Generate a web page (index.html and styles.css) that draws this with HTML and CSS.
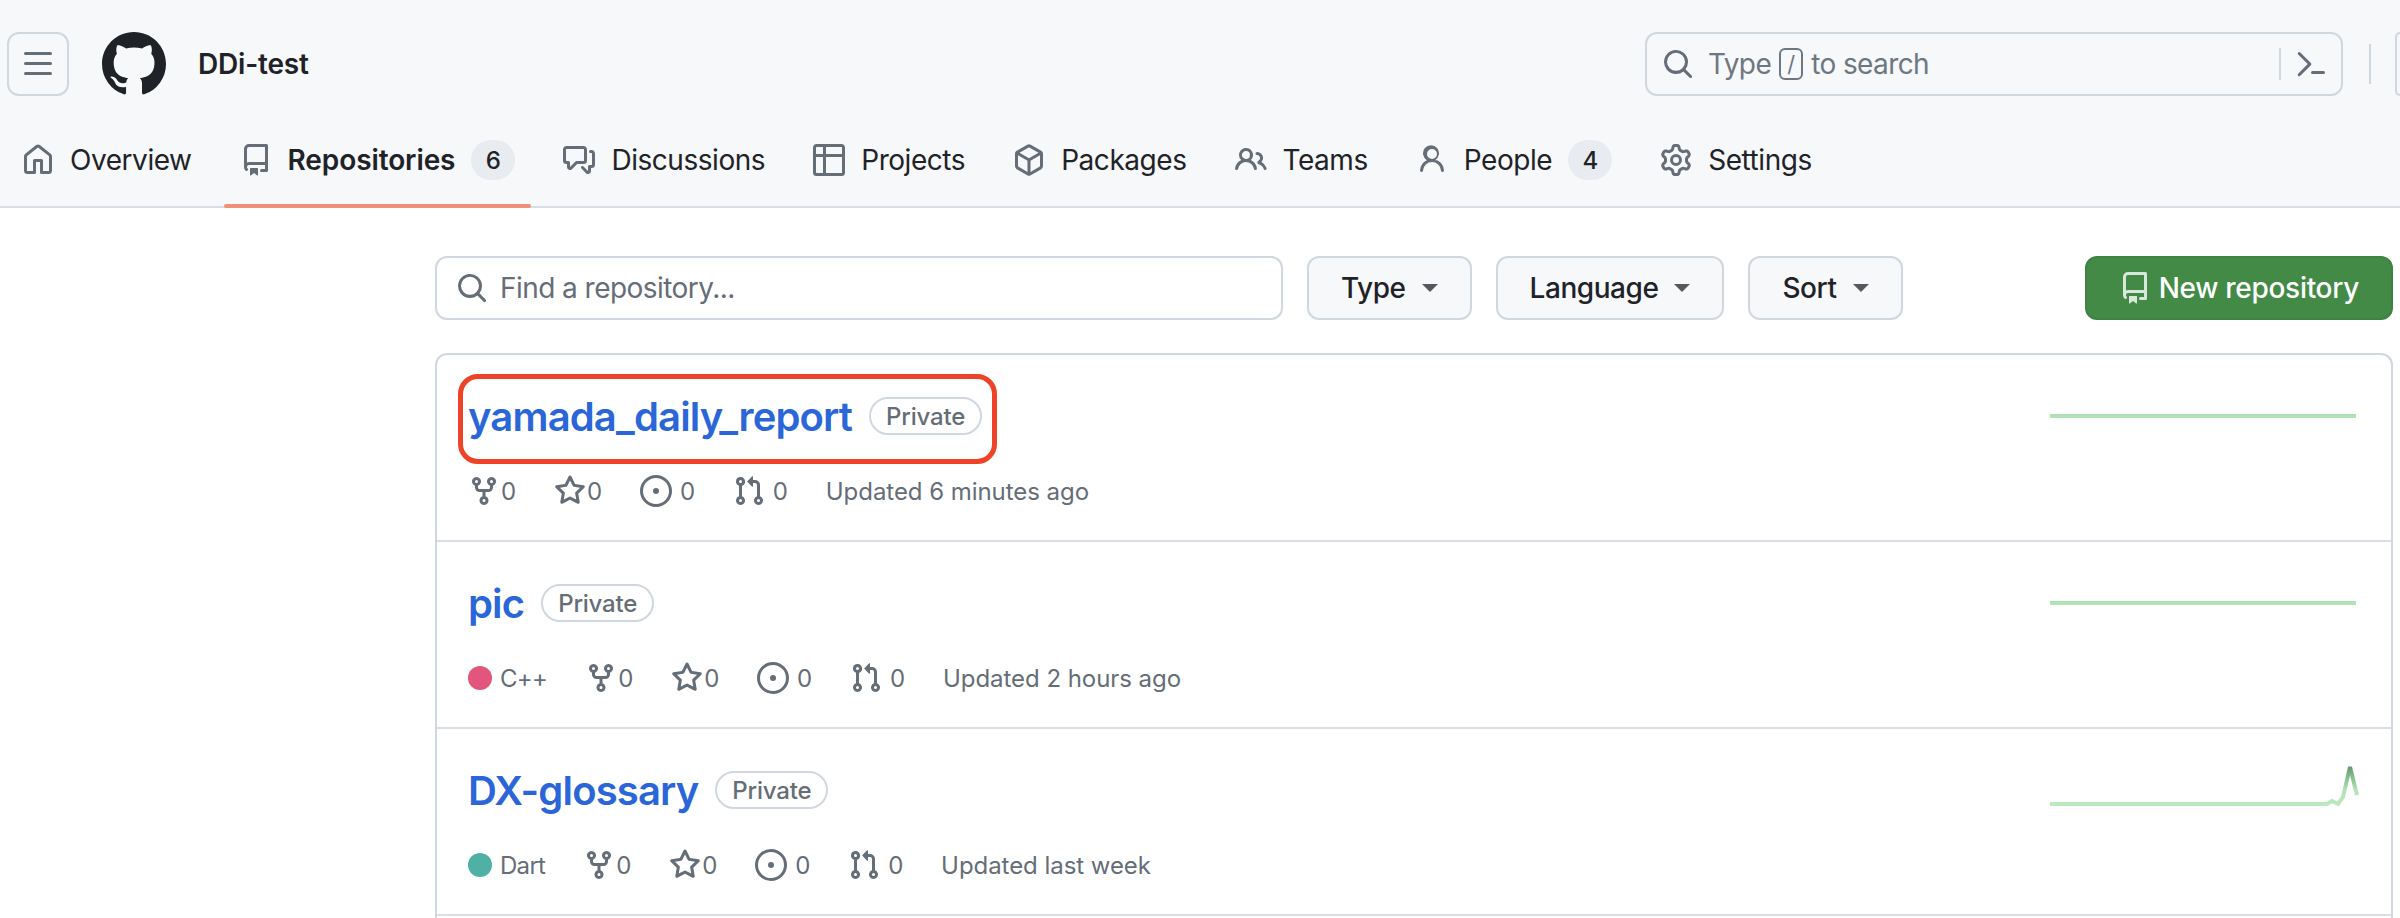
FILE: index.html
```html
<!DOCTYPE html>
<html lang="en">
<head>
<meta charset="utf-8">
<title>DDi-test repositories</title>
<link rel="stylesheet" href="styles.css">
</head>
<body>
<svg class="sprite" aria-hidden="true">
  <symbol id="i-bars" viewBox="0 0 16 16"><path d="M1 2.75A.75.75 0 0 1 1.75 2h12.5a.75.75 0 0 1 0 1.5H1.75A.75.75 0 0 1 1 2.75Zm0 5A.75.75 0 0 1 1.75 7h12.5a.75.75 0 0 1 0 1.5H1.75A.75.75 0 0 1 1 7.75ZM1.75 12h12.5a.75.75 0 0 1 0 1.5H1.75a.75.75 0 0 1 0-1.5Z"/></symbol>
  <symbol id="i-github" viewBox="0 0 16 16"><path d="M8 0c4.42 0 8 3.58 8 8a8.013 8.013 0 0 1-5.45 7.59c-.4.08-.55-.17-.55-.38 0-.27.01-1.13.01-2.2 0-.75-.25-1.23-.54-1.48 1.78-.2 3.65-.88 3.65-3.95 0-.88-.31-1.59-.82-2.15.08-.2.36-1.02-.08-2.12 0 0-.67-.22-2.2.82-.64-.18-1.32-.27-2-.27-.68 0-1.36.09-2 .27-1.53-1.03-2.2-.82-2.2-.82-.44 1.1-.16 1.92-.08 2.12-.51.56-.82 1.28-.82 2.15 0 3.06 1.86 3.75 3.64 3.95-.23.2-.44.55-.51 1.07-.46.21-1.61.55-2.33-.66-.15-.24-.6-.83-1.23-.82-.67.01-.27.38.01.53.34.19.73.9.82 1.13.16.45.68 1.31 2.69.94 0 .67.01 1.3.01 1.49 0 .21-.15.45-.55.38A7.995 7.995 0 0 1 0 8c0-4.42 3.58-8 8-8Z"/></symbol>
  <symbol id="i-home" viewBox="0 0 16 16"><path d="M6.906.664a1.749 1.749 0 0 1 2.187 0l5.25 4.2c.415.332.657.835.657 1.367v7.019A1.75 1.75 0 0 1 13.25 15h-3.5a.75.75 0 0 1-.75-.75V9H7v5.25a.75.75 0 0 1-.75.75h-3.5A1.75 1.75 0 0 1 1 13.25V6.23c0-.531.242-1.034.657-1.366l5.25-4.2Zm1.25 1.171a.25.25 0 0 0-.312 0l-5.25 4.2a.25.25 0 0 0-.094.196v7.019c0 .138.112.25.25.25H5.5V8.25a.75.75 0 0 1 .75-.75h3.5a.75.75 0 0 1 .75.75v5.25h2.75a.25.25 0 0 0 .25-.25V6.23a.25.25 0 0 0-.094-.195Z"/></symbol>
  <symbol id="i-repo" viewBox="0 0 16 16"><path d="M2 2.5A2.5 2.5 0 0 1 4.5 0h8.75a.75.75 0 0 1 .75.75v12.5a.75.75 0 0 1-.75.75h-2.5a.75.75 0 0 1 0-1.5h1.75v-2h-8a1 1 0 0 0-.714 1.7.75.75 0 1 1-1.072 1.05A2.495 2.495 0 0 1 2 11.5Zm10.5-1h-8a1 1 0 0 0-1 1v6.708A2.486 2.486 0 0 1 4.5 9h8ZM5 12.25a.25.25 0 0 1 .25-.25h3.5a.25.25 0 0 1 .25.25v3.25a.25.25 0 0 1-.4.2l-1.45-1.087a.249.249 0 0 0-.3 0L5.4 15.7a.25.25 0 0 1-.4-.2Z"/></symbol>
  <symbol id="i-discussion" viewBox="0 0 16 16"><path d="M1.75 1h8.5c.966 0 1.75.784 1.75 1.75v5.5A1.75 1.75 0 0 1 10.25 10H7.061l-2.574 2.573A1.458 1.458 0 0 1 2 11.543V10h-.25A1.75 1.75 0 0 1 0 8.25v-5.5C0 1.784.784 1 1.75 1ZM1.5 2.75v5.5c0 .138.112.25.25.25h1a.75.75 0 0 1 .75.75v2.19l2.72-2.72a.749.749 0 0 1 .53-.22h3.5a.25.25 0 0 0 .25-.25v-5.5a.25.25 0 0 0-.25-.25h-8.5a.25.25 0 0 0-.25.25Zm13 2a.25.25 0 0 0-.25-.25h-.5a.75.75 0 0 1 0-1.5h.5c.966 0 1.75.784 1.75 1.75v5.5A1.75 1.75 0 0 1 14.25 12H14v1.543a1.458 1.458 0 0 1-2.487 1.03L9.22 12.28a.749.749 0 0 1 .326-1.275.749.749 0 0 1 .734.215l2.22 2.22v-2.19a.75.75 0 0 1 .75-.75h1a.25.25 0 0 0 .25-.25Z"/></symbol>
  <symbol id="i-table" viewBox="0 0 16 16"><path d="M0 1.75C0 .784.784 0 1.75 0h12.5C15.216 0 16 .784 16 1.75v12.5A1.75 1.75 0 0 1 14.25 16H1.75A1.75 1.75 0 0 1 0 14.25ZM6.5 6.5v8h7.75a.25.25 0 0 0 .25-.25V6.5Zm8-1.5V1.75a.25.25 0 0 0-.25-.25H6.5V5Zm-13 1.5v7.75c0 .138.112.25.25.25H5v-8ZM5 5V1.5H1.75a.25.25 0 0 0-.25.25V5Z"/></symbol>
  <symbol id="i-package" viewBox="0 0 16 16"><path d="m8.878.392 5.25 3.045c.54.314.872.89.872 1.514v6.098a1.75 1.75 0 0 1-.872 1.514l-5.25 3.045a1.75 1.75 0 0 1-1.756 0l-5.25-3.045A1.75 1.75 0 0 1 1 11.049V4.951c0-.624.332-1.201.872-1.514L7.122.392a1.75 1.75 0 0 1 1.756 0ZM7.875 1.69l-4.63 2.685L8 7.133l4.755-2.758-4.63-2.685a.248.248 0 0 0-.25 0ZM2.5 5.677v5.372c0 .09.047.171.125.216l4.625 2.683V8.432Zm6.25 8.271 4.625-2.683a.25.25 0 0 0 .125-.216V5.677L8.75 8.432Z"/></symbol>
  <symbol id="i-people" viewBox="0 0 16 16"><path d="M2 5.5a3.5 3.5 0 1 1 5.898 2.549 5.508 5.508 0 0 1 3.034 4.084.75.75 0 1 1-1.482.235 4 4 0 0 0-7.9 0 .75.75 0 0 1-1.482-.236A5.507 5.507 0 0 1 3.102 8.05 3.493 3.493 0 0 1 2 5.5ZM11 4a3.001 3.001 0 0 1 2.22 5.018 5.01 5.01 0 0 1 2.56 3.012.749.749 0 0 1-.885.954.752.752 0 0 1-.549-.514 3.507 3.507 0 0 0-2.522-2.372.75.75 0 0 1-.574-.73v-.352a.75.75 0 0 1 .416-.672A1.5 1.5 0 0 0 11 5.5.75.75 0 0 1 11 4Zm-5.5-.5a2 2 0 1 0-.001 3.999A2 2 0 0 0 5.5 3.5Z"/></symbol>
  <symbol id="i-person" viewBox="0 0 16 16"><path d="M10.561 8.073a6.005 6.005 0 0 1 3.432 5.142.75.75 0 1 1-1.498.07 4.5 4.5 0 0 0-8.99 0 .75.75 0 0 1-1.498-.07 6.004 6.004 0 0 1 3.431-5.142 3.999 3.999 0 1 1 4.123 0ZM10.5 5a2.5 2.5 0 1 0-5 0 2.5 2.5 0 0 0 5 0Z"/></symbol>
  <symbol id="i-gear" viewBox="0 0 16 16"><path d="M8 0a8.2 8.2 0 0 1 .701.031C9.444.095 9.99.645 10.16 1.29l.288 1.107c.018.066.079.158.212.224.231.114.454.243.668.386.123.082.233.09.299.071l1.103-.303c.644-.176 1.392.021 1.82.63.27.385.506.792.704 1.218.315.675.111 1.422-.364 1.891l-.814.806c-.049.048-.098.147-.088.294.016.257.016.515 0 .772-.01.147.038.246.088.294l.814.806c.475.469.679 1.216.364 1.891a7.977 7.977 0 0 1-.704 1.217c-.428.61-1.176.807-1.82.63l-1.102-.302c-.067-.019-.177-.011-.3.071a5.909 5.909 0 0 1-.668.386c-.133.066-.194.158-.211.224l-.29 1.106c-.168.646-.715 1.196-1.458 1.26a8.006 8.006 0 0 1-1.402 0c-.743-.064-1.289-.614-1.458-1.26l-.289-1.106c-.018-.066-.079-.158-.212-.224a5.738 5.738 0 0 1-.668-.386c-.123-.082-.233-.09-.299-.071l-1.103.303c-.644.176-1.392-.021-1.82-.63a8.12 8.12 0 0 1-.704-1.218c-.315-.675-.111-1.422.363-1.891l.815-.806c.05-.048.098-.147.088-.294a6.214 6.214 0 0 1 0-.772c.01-.147-.038-.246-.088-.294l-.815-.806C.635 6.045.431 5.298.746 4.623a7.92 7.92 0 0 1 .704-1.217c.428-.61 1.176-.807 1.82-.63l1.102.302c.067.019.177.011.3-.071.214-.143.437-.272.668-.386.133-.066.194-.158.211-.224l.29-1.106C6.009.645 6.556.095 7.299.03 7.53.01 7.764 0 8 0Zm-.571 1.525c-.036.003-.108.036-.137.146l-.289 1.105c-.147.561-.549.967-.998 1.189-.173.086-.34.183-.5.29-.417.278-.97.423-1.529.27l-1.103-.303c-.109-.03-.175.016-.195.045-.22.312-.412.644-.573.99-.014.031-.021.11.059.19l.815.806c.411.406.562.957.53 1.456a4.709 4.709 0 0 0 0 .582c.032.499-.119 1.05-.53 1.456l-.815.806c-.081.08-.073.159-.059.19.162.346.353.677.573.989.02.03.085.076.195.046l1.102-.303c.56-.153 1.113-.008 1.53.27.161.107.328.204.501.29.447.222.85.629.997 1.189l.289 1.105c.029.109.101.143.137.146a6.6 6.6 0 0 0 1.142 0c.036-.003.108-.036.137-.146l.289-1.105c.147-.561.549-.967.998-1.189.173-.086.34-.183.5-.29.417-.278.97-.423 1.529-.27l1.103.303c.109.029.175-.016.195-.045.22-.313.411-.644.573-.99.014-.031.021-.11-.059-.19l-.815-.806c-.411-.406-.562-.957-.53-1.456a4.709 4.709 0 0 0 0-.582c-.032-.499.119-1.05.53-1.456l.815-.806c.081-.08.073-.159.059-.19a6.464 6.464 0 0 0-.573-.989c-.02-.03-.085-.076-.195-.046l-1.102.303c-.56.153-1.113.008-1.53-.27a4.44 4.44 0 0 0-.501-.29c-.447-.222-.85-.629-.997-1.189l-.289-1.105c-.029-.11-.101-.143-.137-.146a6.6 6.6 0 0 0-1.142 0ZM11 8a3 3 0 1 1-6 0 3 3 0 0 1 6 0ZM9.5 8a1.5 1.5 0 1 0-3.001.001A1.5 1.5 0 0 0 9.5 8Z"/></symbol>
  <symbol id="i-search" viewBox="0 0 16 16"><path d="M10.68 11.74a6 6 0 0 1-7.922-8.982 6 6 0 0 1 8.982 7.922l3.04 3.04a.749.749 0 0 1-.326 1.275.749.749 0 0 1-.734-.215ZM11.5 7a4.499 4.499 0 1 0-8.997 0A4.499 4.499 0 0 0 11.5 7Z"/></symbol>
  <symbol id="i-terminal" viewBox="0 0 16 16"><path d="m6.354 8.04-4.773 4.773a.75.75 0 1 0 1.061 1.06L7.945 8.57a.75.75 0 0 0 0-1.06L2.642 2.206a.75.75 0 0 0-1.06 1.061L6.353 8.04ZM8.75 11.5a.75.75 0 0 0 0 1.5h5.5a.75.75 0 0 0 0-1.5h-5.5Z"/></symbol>
  <symbol id="i-fork" viewBox="0 0 16 16"><path d="M5 5.372v.878c0 .414.336.75.75.75h4.5a.75.75 0 0 0 .75-.75v-.878a2.25 2.25 0 1 1 1.5 0v.878a2.25 2.25 0 0 1-2.25 2.25h-1.5v2.128a2.251 2.251 0 1 1-1.5 0V8.5h-1.5A2.25 2.25 0 0 1 3.5 6.25v-.878a2.25 2.25 0 1 1 1.5 0ZM5 3.25a.75.75 0 1 0-1.5 0 .75.75 0 0 0 1.5 0Zm6.75.75a.75.75 0 1 0 0-1.5.75.75 0 0 0 0 1.5Zm-3 8.75a.75.75 0 1 0-1.5 0 .75.75 0 0 0 1.5 0Z"/></symbol>
  <symbol id="i-star" viewBox="0 0 16 16"><path d="M8 .25a.75.75 0 0 1 .673.418l1.882 3.815 4.21.612a.75.75 0 0 1 .416 1.279l-3.046 2.97.719 4.192a.751.751 0 0 1-1.088.791L8 12.347l-3.766 1.98a.75.75 0 0 1-1.088-.79l.72-4.194L.818 6.374a.75.75 0 0 1 .416-1.28l4.21-.611L7.327.668A.75.75 0 0 1 8 .25Zm0 2.445L6.615 5.5a.75.75 0 0 1-.564.41l-3.097.45 2.24 2.184a.75.75 0 0 1 .216.664l-.528 3.084 2.769-1.456a.75.75 0 0 1 .698 0l2.77 1.456-.53-3.084a.75.75 0 0 1 .216-.664l2.24-2.183-3.096-.45a.75.75 0 0 1-.564-.41L8 2.694Z"/></symbol>
  <symbol id="i-issue" viewBox="0 0 16 16"><path d="M8 9.5a1.5 1.5 0 1 0 0-3 1.5 1.5 0 0 0 0 3Z"/><path d="M8 0a8 8 0 1 1 0 16A8 8 0 0 1 8 0ZM1.5 8a6.5 6.5 0 1 0 13 0 6.5 6.5 0 0 0-13 0Z"/></symbol>
  <symbol id="i-pr" viewBox="0 0 16 16"><path d="M1.5 3.25a2.25 2.25 0 1 1 3 2.122v5.256a2.251 2.251 0 1 1-1.5 0V5.372A2.25 2.25 0 0 1 1.5 3.25Zm5.677-.177L9.573.677A.25.25 0 0 1 10 .854V2.5h1A2.5 2.5 0 0 1 13.5 5v5.628a2.251 2.251 0 1 1-1.5 0V5a1 1 0 0 0-1-1h-1v1.646a.25.25 0 0 1-.427.177L7.177 3.427a.25.25 0 0 1 0-.354ZM3.75 2.5a.75.75 0 1 0 0 1.5.75.75 0 0 0 0-1.5Zm0 9.5a.75.75 0 1 0 0 1.5.75.75 0 0 0 0-1.5Zm8.25.75a.75.75 0 1 0 1.5 0 .75.75 0 0 0-1.5 0Z"/></symbol>
  <linearGradient id="spark" gradientUnits="userSpaceOnUse" x1="0" y1="80" x2="0" y2="30">
    <stop offset="0" stop-color="#c4ecc8"/><stop offset="0.5" stop-color="#b0e3b5"/><stop offset="0.72" stop-color="#8cc393"/><stop offset="1" stop-color="#66916d"/>
  </linearGradient>
</svg>

<header class="header">
  <div class="topbar">
    <button class="menu-btn"><svg class="icon"><use href="#i-bars"/></svg></button>
    <svg class="logo"><use href="#i-github"/></svg>
    <span class="org">DDi-test</span>
    <div class="search">
      <svg class="icon search-icon"><use href="#i-search"/></svg>
      <span class="search-text">Type</span>
      <kbd class="slash">/</kbd>
      <span class="search-text">to search</span>
      <span class="search-sep"></span>
      <svg class="icon terminal"><use href="#i-terminal"/></svg>
    </div>
    <span class="bar-sep"></span>
    <button class="clipped-btn"></button>
  </div>
  <nav class="tabs">
    <a class="tab"><svg class="icon"><use href="#i-home"/></svg><span>Overview</span></a>
    <a class="tab tab-active"><svg class="icon"><use href="#i-repo"/></svg><span>Repositories</span><span class="counter">6</span></a>
    <a class="tab"><svg class="icon"><use href="#i-discussion"/></svg><span>Discussions</span></a>
    <a class="tab"><svg class="icon"><use href="#i-table"/></svg><span>Projects</span></a>
    <a class="tab"><svg class="icon"><use href="#i-package"/></svg><span>Packages</span></a>
    <a class="tab"><svg class="icon"><use href="#i-people"/></svg><span>Teams</span></a>
    <a class="tab"><svg class="icon"><use href="#i-person"/></svg><span>People</span><span class="counter">4</span></a>
    <a class="tab"><svg class="icon"><use href="#i-gear"/></svg><span>Settings</span></a>
  </nav>
</header>

<main class="main">
  <div class="filters">
    <div class="find">
      <svg class="icon"><use href="#i-search"/></svg>
      <span>Find a repository...</span>
    </div>
    <button class="btn">Type<i class="caret"></i></button>
    <button class="btn">Language<i class="caret"></i></button>
    <button class="btn">Sort<i class="caret"></i></button>
    <button class="btn-new"><svg class="icon"><use href="#i-repo"/></svg>New repository</button>
  </div>

  <ul class="list">
    <li class="row">
      <div class="info">
        <div class="title-line"><a class="name">yamada_daily_report</a><span class="badge">Private</span></div>
        <div class="stats">
          <span class="stat stat-tight"><svg class="icon"><use href="#i-fork"/></svg>0</span>
          <span class="stat stat-tight"><svg class="icon"><use href="#i-star"/></svg>0</span>
          <span class="stat"><svg class="icon"><use href="#i-issue"/></svg>0</span>
          <span class="stat"><svg class="icon"><use href="#i-pr"/></svg>0</span>
          <span class="updated">Updated 6 minutes ago</span>
        </div>
      </div>
      <svg class="spark" viewBox="0 0 320 100"><path class="spark-line" d="M0 55H306"/></svg>
      <span class="callout"></span>
    </li>
    <li class="row">
      <div class="info">
        <div class="title-line"><a class="name">pic</a><span class="badge">Private</span></div>
        <div class="stats">
          <span class="stat lang"><i class="dot dot-cpp"></i>C++</span>
          <span class="stat stat-tight"><svg class="icon"><use href="#i-fork"/></svg>0</span>
          <span class="stat stat-tight"><svg class="icon"><use href="#i-star"/></svg>0</span>
          <span class="stat"><svg class="icon"><use href="#i-issue"/></svg>0</span>
          <span class="stat"><svg class="icon"><use href="#i-pr"/></svg>0</span>
          <span class="updated">Updated 2 hours ago</span>
        </div>
      </div>
      <svg class="spark" viewBox="0 0 320 100"><path class="spark-line" d="M0 55H306"/></svg>
    </li>
    <li class="row">
      <div class="info">
        <div class="title-line"><a class="name">DX-glossary</a><span class="badge">Private</span></div>
        <div class="stats">
          <span class="stat lang"><i class="dot dot-dart"></i>Dart</span>
          <span class="stat stat-tight"><svg class="icon"><use href="#i-fork"/></svg>0</span>
          <span class="stat stat-tight"><svg class="icon"><use href="#i-star"/></svg>0</span>
          <span class="stat"><svg class="icon"><use href="#i-issue"/></svg>0</span>
          <span class="stat"><svg class="icon"><use href="#i-pr"/></svg>0</span>
          <span class="updated">Updated last week</span>
        </div>
      </div>
      <svg class="spark" viewBox="0 0 320 100"><path class="spark-line" d="M0 69H277L282 66 288 69 293 62 300 32 307 60"/></svg>
    </li>
    <li class="row row-cut"></li>
  </ul>
</main>
</body>
</html>
```
FILE: styles.css
```css
* { box-sizing: border-box; }
html, body { margin: 0; height: 918px; overflow: hidden; background: #fff; }
body { font-family: Inter, "Liberation Sans", sans-serif; color: #1f2328; font-size: 28px; }
.sprite { position: absolute; width: 0; height: 0; }
.icon { width: 32px; height: 32px; fill: #656d76; flex: none; display: block; }
button { font: inherit; color: inherit; }

.header { height: 208px; padding-top: 32px; background: #f6f8fa; border-bottom: 2px solid #d8dee4; }
.topbar { display: flex; align-items: center; height: 64px; padding-left: 7px; }
.menu-btn { width: 62px; height: 64px; padding: 0; display: flex; align-items: center; justify-content: center; background: #f6f8fa; border: 2px solid #d0d7de; border-radius: 12px; }
.logo { width: 64px; height: 64px; margin-left: 33px; fill: #1f2328; flex: none; }
.org { margin-left: 32px; font-weight: 600; letter-spacing: -.2px; }
.search { margin-left: auto; width: 698px; height: 64px; display: flex; align-items: center; padding-left: 15px; padding-right: 14px; background: #f6f8fa; border: 2px solid #d0d7de; border-radius: 12px; color: #6e7781; }
.search-icon { margin-right: 14px; }
.search-text { letter-spacing: -.6px; }
.slash { width: 24px; height: 32px; margin: 0 8px; display: flex; align-items: center; justify-content: center; border: 2px solid #6e7781; border-radius: 6px; font: 400 22px Inter, sans-serif; }
.search-sep { width: 2px; height: 32px; margin-left: auto; background: #d0d7de; }
.terminal { margin-left: 14px; }
.bar-sep { width: 2px; height: 40px; margin-left: 26px; background: #d0d7de; }
.clipped-btn { width: 5px; height: 64px; margin-left: 24px; padding: 0; flex: none; background: #f6f8fa; border: 2px solid #d0d7de; border-right: 0; border-radius: 12px 0 0 12px; }

.tabs { display: flex; gap: 16px; height: 94px; margin-top: 16px; padding-left: 6px; }
.tab { position: relative; display: flex; align-items: center; gap: 16px; padding: 0 16px; height: 96px; letter-spacing: -.45px; white-space: nowrap; }
.tab-active { font-weight: 600; letter-spacing: -.1px; }
.tab-active::after { content: ""; position: absolute; left: 0; right: 0; bottom: 0; height: 4px; background: #f1907a; border-radius: 2px; }
.counter { min-width: 44px; height: 40px; display: flex; align-items: center; justify-content: center; background: #e8ebef; border-radius: 20px; font-size: 24px; font-weight: 500; }

.main { padding: 48px 7px 0 435px; }
.filters { display: flex; height: 64px; }
.find { width: 848px; margin-right: 24px; display: flex; align-items: center; gap: 12px; padding-left: 19px; border: 2px solid #d0d7de; border-radius: 12px; color: #656d76; letter-spacing: -.55px; }
.btn { height: 64px; margin-right: 24px; padding: 0 32px; display: flex; align-items: center; gap: 16px; background: #f6f8fa; border: 2px solid #d0d7de; border-radius: 12px; font-weight: 500; letter-spacing: -.45px; }
.caret { width: 0; height: 0; border: 8px solid transparent; border-top-color: #1f2328; border-bottom-width: 0; opacity: .75; }
.btn-new { height: 64px; margin-left: auto; padding: 0 32px; display: flex; align-items: center; gap: 8px; background: #438a47; border: 2px solid #3e8244; border-radius: 12px; color: #fff; font-weight: 500; letter-spacing: -.3px; }
.btn-new .icon { fill: rgba(255,255,255,.8); }

.list { list-style: none; margin: 33px 0 0; padding: 0; border: 2px solid #d0d7de; border-bottom: 0; border-radius: 12px 12px 0 0; }
.row { position: relative; display: flex; height: 185px; }
.row + .row { border-top: 2px solid #d8dee4; height: 187px; }
.row + .row-cut { height: 4px; }
.info { padding: 31px 0 0 31px; }
.title-line { display: flex; align-items: center; gap: 17px; height: 60px; }
.name { font-size: 40px; font-weight: 600; color: #2b66d9; letter-spacing: -.85px; }
.badge { height: 38px; padding: 0 15px; display: flex; align-items: center; border: 2px solid #d0d7de; border-radius: 20px; font-size: 24px; font-weight: 500; color: #656d76; letter-spacing: -.2px; }
.stats { display: flex; align-items: center; gap: 38px; height: 40px; margin-top: 25px; font-size: 24px; color: #656d76; letter-spacing: -.2px; }
.stat { display: flex; align-items: center; gap: 8px; }
.stat-tight { gap: 1px; }
.lang { letter-spacing: -.7px; }
.updated { letter-spacing: -.05px; }
.dot { width: 24px; height: 24px; border-radius: 50%; }
.dot-cpp { background: #e2557c; }
.dot-dart { background: #4fb0a5; }
.spark { width: 320px; height: 100px; margin-left: auto; margin-right: 21px; margin-top: 6px; overflow: visible; flex: none; }
.spark-line { fill: none; stroke: url(#spark); stroke-width: 4; }
.callout { position: absolute; left: 21px; top: 19px; width: 539px; height: 90px; border: 5px solid #ee4326; border-radius: 20px; }
```
